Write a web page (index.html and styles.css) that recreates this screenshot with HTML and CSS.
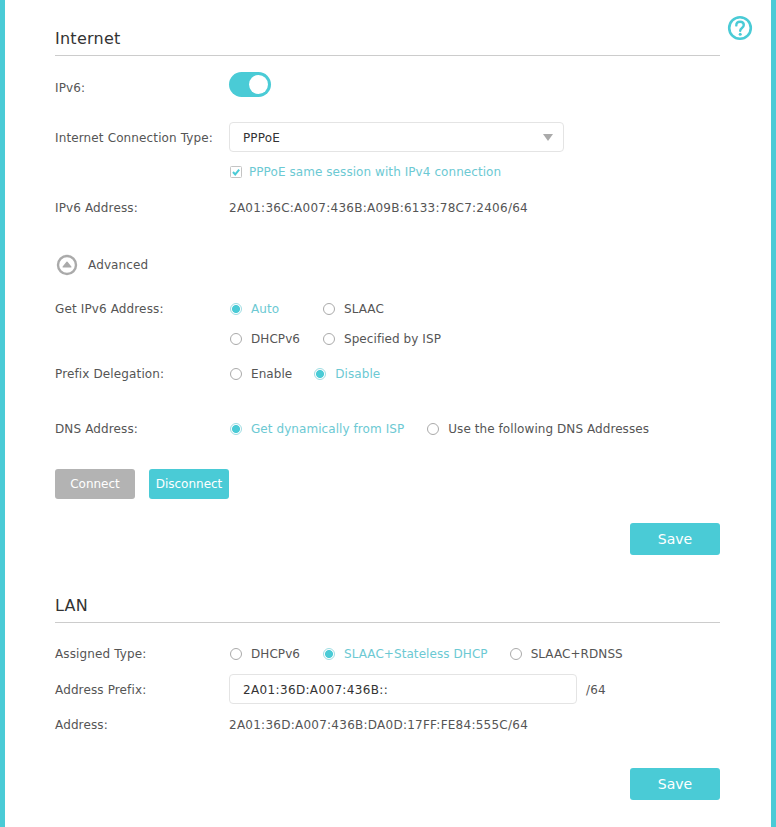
FILE: index.html
```html
<!DOCTYPE html>
<html lang="en">
<head>
<meta charset="utf-8">
<title>IPv6</title>
<link rel="stylesheet" href="styles.css">
</head>
<body>
<main class="page">
  <svg class="help" width="26" height="26" viewBox="0 0 26 26" fill="none">
    <circle cx="13" cy="13" r="10.8" stroke="#4acbd6" stroke-width="2.6"/>
    <path d="M9.3 10.4c0-2.2 1.6-3.6 3.8-3.6s3.7 1.3 3.7 3.3c0 2.9-3.6 2.8-3.6 5.6" stroke="#4acbd6" stroke-width="2.4" stroke-linecap="round"/>
    <circle cx="13.2" cy="19.2" r="1.5" fill="#4acbd6"/>
  </svg>

  <section class="section">
    <h2 class="title">Internet</h2>
    <div class="row m-16"><span class="label">IPv6:</span><span class="toggle"><span class="knob"></span></span></div>
    <div class="row m-20"><span class="label">Internet Connection Type:</span>
      <div class="select"><span class="select-text">PPPoE</span><svg width="10" height="7" viewBox="0 0 10 7"><path d="M0 0h10L5 7z" fill="#aaa"/></svg></div>
    </div>
    <div class="row m-4"><span class="label"></span>
      <span class="option active"><svg class="box" width="13" height="13" viewBox="0 0 13 13" fill="none"><rect x=".5" y=".5" width="11" height="11" rx="1" fill="#fff" stroke="#c4c4c4"/><path d="M3 6l2.2 2.4L9.2 3.6" stroke="#4acbd6" stroke-width="2"/></svg>PPPoE same session with IPv4 connection</span>
    </div>
    <div class="row m-6"><span class="label">IPv6 Address:</span><span class="value">2A01:36C:A007:436B:A09B:6133:78C7:2406/64</span></div>
    <div class="row m-27 advanced">
      <svg class="adv-icon" width="22" height="22" viewBox="0 0 22 22" fill="none">
        <circle cx="11" cy="11" r="9" stroke="#aaa" stroke-width="2.4"/>
        <path d="M11 8.3l3.8 4.6H7.2z" fill="#aaa" stroke="#aaa" stroke-width="1.4" stroke-linejoin="round"/>
      </svg>
      <span>Advanced</span>
    </div>
    <div class="row m-14"><span class="label">Get IPv6 Address:</span>
      <div class="options">
        <label class="option fixed active"><span class="radio on"></span>Auto</label>
        <label class="option"><span class="radio"></span>SLAAC</label>
      </div>
    </div>
    <div class="row"><span class="label"></span>
      <div class="options">
        <label class="option fixed"><span class="radio"></span>DHCPv6</label>
        <label class="option"><span class="radio"></span>Specified by ISP</label>
      </div>
    </div>
    <div class="row m-5"><span class="label">Prefix Delegation:</span>
      <div class="options">
        <label class="option"><span class="radio"></span>Enable</label>
        <label class="option active"><span class="radio on"></span>Disable</label>
      </div>
    </div>
    <div class="row m-25"><span class="label">DNS Address:</span>
      <div class="options wide">
        <label class="option active"><span class="radio on"></span>Get dynamically from ISP</label>
        <label class="option"><span class="radio"></span>Use the following DNS Addresses</label>
      </div>
    </div>
    <div class="buttons">
      <button class="btn small grey">Connect</button>
      <button class="btn small">Disconnect</button>
    </div>
    <div class="actions"><button class="btn save">Save</button></div>
  </section>

  <section class="section lan">
    <h2 class="title">LAN</h2>
    <div class="row m-15"><span class="label">Assigned Type:</span>
      <div class="options">
        <label class="option fixed"><span class="radio"></span>DHCPv6</label>
        <label class="option active"><span class="radio on"></span>SLAAC+Stateless DHCP</label>
        <label class="option"><span class="radio"></span>SLAAC+RDNSS</label>
      </div>
    </div>
    <div class="row m-6"><span class="label">Address Prefix:</span>
      <input class="text" type="text" value="2A01:36D:A007:436B::"><span class="suffix">/64</span>
    </div>
    <div class="row m-5"><span class="label">Address:</span><span class="value">2A01:36D:A007:436B:DA0D:17FF:FE84:555C/64</span></div>
    <div class="actions last"><button class="btn save">Save</button></div>
  </section>
</main>
</body>
</html>
```

FILE: styles.css
```css
* { box-sizing: border-box; }
html, body { margin: 0; height: 100%; }
body {
  background: #fff;
  font-family: "DejaVu Sans", Verdana, sans-serif;
  font-size: 12px;
  letter-spacing: 0.13px;
  color: #555;
  overflow: hidden;
}
.page {
  position: relative;
  height: 827px;
  border-left: 5px solid #4acbd6;
  border-right: 5px solid #4acbd6;
  padding: 20px 51px 0 50px;
}
.help { position: absolute; top: 15px; right: 18px; }
.title {
  margin: 0;
  height: 36px;
  line-height: 38px;
  font-size: 16px;
  font-weight: 400;
  letter-spacing: 0.25px;
  color: #333;
  border-bottom: 1px solid #ccc;
}
.lan { margin-top: 32px; }
.row { display: flex; align-items: flex-start; height: 30px; line-height: 32px; }
.m-4 { margin-top: 4px; }
.m-5 { margin-top: 5px; }
.m-6 { margin-top: 6px; }
.m-14 { margin-top: 14px; }
.m-15 { margin-top: 15px; }
.m-16 { margin-top: 16px; }
.m-20 { margin-top: 20px; }
.m-25 { margin-top: 25px; }
.m-27 { margin-top: 27px; }
.label { flex: none; width: 174px; }
.toggle {
  position: relative;
  display: block;
  width: 42px;
  height: 25px;
  border-radius: 13px;
  background: #4acbd6;
}
.knob {
  position: absolute;
  top: 3px;
  right: 3px;
  width: 19px;
  height: 19px;
  border-radius: 50%;
  background: #fff;
}
.select {
  display: flex;
  align-items: center;
  justify-content: space-between;
  width: 335px;
  height: 30px;
  line-height: 28px;
  padding: 0 10px 0 13px;
  border: 1px solid #e4e4e4;
  border-radius: 4px;
  color: #333;
}
.select-text { padding-top: 2px; }
.option { display: inline-flex; align-items: center; color: #555; letter-spacing: 0.07px; }
.option.active { color: #6cc9d3; }
.option.fixed { width: 93px; }
.box { margin: 0 6px 0 1px; }
.options { display: flex; gap: 21px; }
.options.wide { gap: 22px; }
.options .fixed + .option { margin-left: -21px; }
.radio {
  flex: none;
  width: 12px;
  height: 12px;
  margin: 0 9px 0 1px;
  border: 1px solid #aaa;
  border-radius: 50%;
  background: #fff;
}
.radio.on {
  border-color: #9fdde3;
  background: radial-gradient(circle, #4acbd6 0 3.6px, #fff 4.4px);
}
.value { color: #555; letter-spacing: 0.25px; }
.adv-icon { margin: 5px 10px 0 1px; }
.buttons { display: flex; gap: 14px; margin-top: 26px; }
.btn {
  display: block;
  border: 0;
  border-radius: 3px;
  background: #4acbd6;
  color: #fff;
  font-family: inherit;
  padding: 0;
}
.btn.small { width: 80px; height: 30px; font-size: 12px; }
.btn.grey { background: #b3b3b3; }
.actions { display: flex; justify-content: flex-end; margin-top: 24px; }
.actions.last { margin-top: 29px; }
.save { width: 90px; height: 32px; font-size: 14px; }
.text {
  width: 348px;
  height: 30px;
  padding: 2px 13px 0;
  border: 1px solid #e4e4e4;
  border-radius: 4px;
  font-family: inherit;
  font-size: 12px;
  letter-spacing: 0.35px;
  color: #333;
  outline: none;
}
.suffix { margin-left: 9px; }
```
